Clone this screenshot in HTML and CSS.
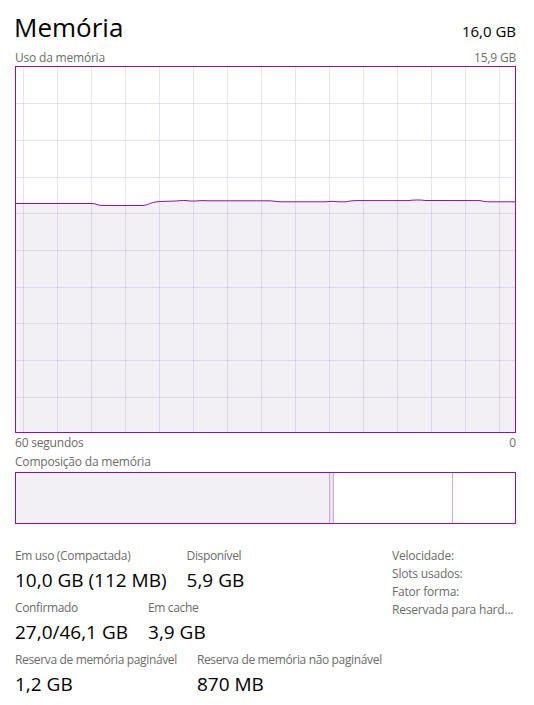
FILE: index.html
```html
<!DOCTYPE html>
<html lang="pt-BR">
<head>
  <meta charset="UTF-8" />
  <meta name="viewport" content="width=device-width, initial-scale=1.0"/>
  <title>Memória</title>
  <link rel="stylesheet" href="styles.css">
</head>
<body>

  <div class="header">
    <h1>Memória</h1>
    <span class="total">16,0 GB</span>
  </div>

  <div class="caption">
    <span>Uso da memória</span>
    <span>15,9 GB</span>
  </div>

  <div class="graph">
    <svg viewBox="0 0 499 365" width="499" height="365">
      <!-- area under the usage line -->
      <path class="area" d="M0,136.5 L76,136.5 C80,136.5 82,138.5 86,138.5 L126,138.5 C132,138.5 134,135 144,134.5 L160,134 C166,133.3 170,133.3 174,134 L180,134 C184,133.5 188,133.5 192,133.8 L252,133.8 C258,133.8 260,134.8 266,134.8 L310,134.8 C314,134.2 318,134.2 322,134.8 L330,134.8 C334,133.8 338,133.6 342,133.6 L392,133.6 C398,132.8 404,132.8 410,133.5 L464,133.6 C468,134.5 470,134.8 474,134.8 L499,134.8 L499,365 L0,365 Z"/>
      <g class="grid">
        <line x1="7.5" y1="0" x2="7.5" y2="365"/>
        <line x1="41.5" y1="0" x2="41.5" y2="365"/>
        <line x1="75.5" y1="0" x2="75.5" y2="365"/>
        <line x1="109.5" y1="0" x2="109.5" y2="365"/>
        <line x1="143.5" y1="0" x2="143.5" y2="365"/>
        <line x1="177.5" y1="0" x2="177.5" y2="365"/>
        <line x1="211.5" y1="0" x2="211.5" y2="365"/>
        <line x1="245.5" y1="0" x2="245.5" y2="365"/>
        <line x1="279.5" y1="0" x2="279.5" y2="365"/>
        <line x1="313.5" y1="0" x2="313.5" y2="365"/>
        <line x1="347.5" y1="0" x2="347.5" y2="365"/>
        <line x1="381.5" y1="0" x2="381.5" y2="365"/>
        <line x1="415.5" y1="0" x2="415.5" y2="365"/>
        <line x1="449.5" y1="0" x2="449.5" y2="365"/>
        <line x1="483.5" y1="0" x2="483.5" y2="365"/>
        <line x1="0" y1="36.5" x2="499" y2="36.5"/>
        <line x1="0" y1="73.5" x2="499" y2="73.5"/>
        <line x1="0" y1="110.5" x2="499" y2="110.5"/>
        <line x1="0" y1="146.5" x2="499" y2="146.5"/>
        <line x1="0" y1="183.5" x2="499" y2="183.5"/>
        <line x1="0" y1="220.5" x2="499" y2="220.5"/>
        <line x1="0" y1="256.5" x2="499" y2="256.5"/>
        <line x1="0" y1="293.5" x2="499" y2="293.5"/>
        <line x1="0" y1="330.5" x2="499" y2="330.5"/>
      </g>
      <path class="usage" d="M0,136.5 L76,136.5 C80,136.5 82,138.5 86,138.5 L126,138.5 C132,138.5 134,135 144,134.5 L160,134 C166,133.3 170,133.3 174,134 L180,134 C184,133.5 188,133.5 192,133.8 L252,133.8 C258,133.8 260,134.8 266,134.8 L310,134.8 C314,134.2 318,134.2 322,134.8 L330,134.8 C334,133.8 338,133.6 342,133.6 L392,133.6 C398,132.8 404,132.8 410,133.5 L464,133.6 C468,134.5 470,134.8 474,134.8 L499,134.8"/>
    </svg>
  </div>

  <div class="caption axis">
    <span>60 segundos</span>
    <span>0</span>
  </div>

  <div class="caption">
    <span>Composição da memória</span>
  </div>

  <div class="composition">
    <div class="seg used"></div>
    <div class="seg modified"></div>
    <div class="seg standby"></div>
    <div class="seg free"></div>
  </div>

  <div class="details">
    <div class="stats">
      <div class="stat-row">
        <div class="stat">
          <div class="label">Em uso (Compactada)</div>
          <div class="value">10,0 GB (112 MB)</div>
        </div>
        <div class="stat">
          <div class="label">Disponível</div>
          <div class="value">5,9 GB</div>
        </div>
      </div>
      <div class="stat-row">
        <div class="stat">
          <div class="label">Confirmado</div>
          <div class="value">27,0/46,1 GB</div>
        </div>
        <div class="stat">
          <div class="label">Em cache</div>
          <div class="value">3,9 GB</div>
        </div>
      </div>
      <div class="stat-row">
        <div class="stat">
          <div class="label">Reserva de memória paginável</div>
          <div class="value">1,2 GB</div>
        </div>
        <div class="stat">
          <div class="label">Reserva de memória não paginável</div>
          <div class="value">870 MB</div>
        </div>
      </div>
    </div>

    <ul class="specs">
      <li>Velocidade:</li>
      <li>Slots usados:</li>
      <li>Fator forma:</li>
      <li>Reservada para hard...</li>
    </ul>
  </div>

</body>
</html>
```

FILE: styles.css
```css
:root {
  --accent: #8b12ae;
  --fill: #f2f0f4;
  --grid: rgba(130, 60, 150, 0.14);
  --divider: #cfa8dc;
  --muted: #6b6b6b;
  --text: #000;
}

body {
  font-family: 'Segoe UI', 'Open Sans', sans-serif;
  color: var(--text);
  background: #fff;
  margin: 0;
  padding: 0 18px 0 15px;
}

.header {
  display: flex;
  justify-content: space-between;
  align-items: baseline;
  height: 46px;
  padding-top: 4px;
}

h1 {
  font-size: 26px;
  font-weight: 400;
  margin: 0;
  margin-left: -1px;
  line-height: 46px;
}

.total {
  font-size: 15px;
}

.caption {
  display: flex;
  justify-content: space-between;
  font-size: 12px;
  letter-spacing: -0.2px;
  line-height: 16px;
  color: var(--muted);
}

.caption.axis {
  margin-top: 2px;
  margin-bottom: 3px;
}

.graph {
  border: 1px solid var(--accent);
  height: 365px;
}

.graph svg {
  display: block;
}

.area {
  fill: var(--fill);
}

.grid line {
  stroke: var(--grid);
  stroke-width: 1;
}

.usage {
  fill: none;
  stroke: var(--accent);
  stroke-width: 1;
}

.composition {
  display: flex;
  margin-top: 2px;
  height: 50px;
  border: 1px solid var(--accent);
}

.seg.used {
  width: 313px;
  background: var(--fill);
}

.seg.modified {
  width: 3px;
  background: #ebe3ee;
  border-left: 1px solid var(--divider);
  border-right: 1px solid var(--divider);
}

.seg.standby {
  width: 118px;
  border-right: 1px solid var(--divider);
}

.seg.free {
  flex: 1;
}

.details {
  display: grid;
  grid-template-columns: 1fr 124px;
  margin-top: 24px;
  white-space: nowrap;
}

.stat-row {
  display: flex;
  gap: 20px;
  margin-bottom: 8px;
}

.label {
  font-size: 12px;
  letter-spacing: -0.35px;
  line-height: 16px;
  color: var(--muted);
}

.value {
  font-size: 19px;
  line-height: 24px;
  margin-top: 4px;
}

.specs {
  list-style: none;
  margin: 0;
  padding: 0;
  margin-top: -1px;
  font-size: 12px;
  letter-spacing: -0.2px;
  line-height: 18px;
  color: var(--muted);
}
```
